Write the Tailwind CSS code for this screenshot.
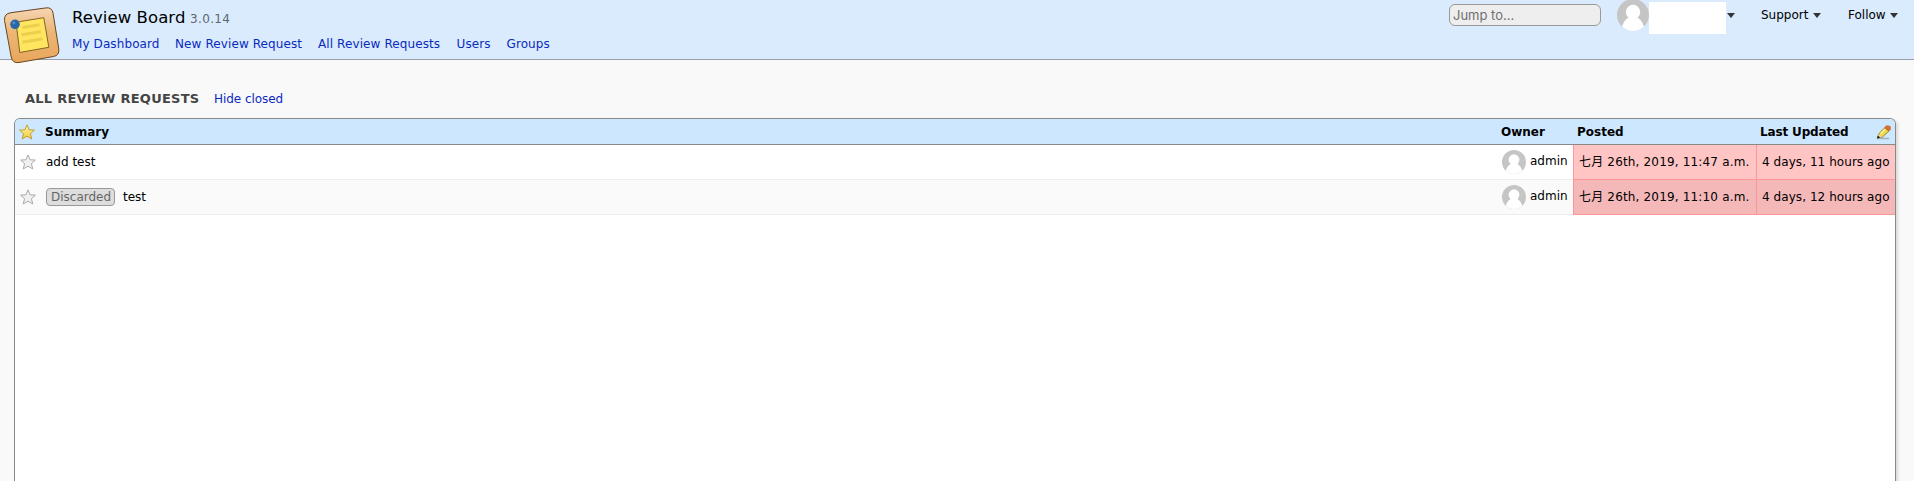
<!DOCTYPE html>
<html lang="en">
<head>
<meta charset="utf-8">
<title>Review Board</title>
<script src="https://cdn.jsdelivr.net/npm/@tailwindcss/browser@4"></script>
</head>
<body class="flex h-[481px] flex-col overflow-hidden bg-[#f9f9f9] font-['DejaVu_Sans','Noto_Sans_CJK_SC',sans-serif] text-[12px] leading-4 text-black">
<svg class="absolute h-0 w-0" aria-hidden="true">
  <defs>
    <linearGradient id="gold" x1="0" y1="0" x2="0" y2="1"><stop offset="0" stop-color="#fff6a0"/><stop offset="1" stop-color="#f4cb3a"/></linearGradient>
    <linearGradient id="wood" x1="0" y1="0" x2="0" y2="1"><stop offset="0" stop-color="#f6d5b3"/><stop offset=".45" stop-color="#ecb676"/><stop offset="1" stop-color="#e9a65b"/></linearGradient>
    <clipPath id="round"><circle cx="16" cy="16" r="16"/></clipPath>
    <symbol id="star" viewBox="0 0 16 16"><path d="M8 .9 10.100 5.800 15.400 6.100 11.400 9.700 12.800 15 8 12.200 3.200 15 4.600 9.700.6 6.100 5.900 5.800Z" stroke-linejoin="round"/></symbol>
    <symbol id="person" viewBox="0 0 32 32"><g clip-path="url(#round)"><path fill="#c5c5c5" d="M0 0h32v32H0z"/><circle cx="16" cy="13" r="7.200" fill="#fff"/><path fill="#fff" d="M4.500 32C5 24 8.500 20 12.500 18h7C23.500 20 27 24 27.500 32Z"/></g></symbol>
  </defs>
</svg>
<header class="flex h-[60px] shrink-0 border-b border-[#999fa6] bg-[#d9ebfd]">
  <svg class="ml-[3px] mt-[6px] h-[58px] w-[58px] shrink-0" viewBox="3 6 58 58">
    <path d="M11 12.700 46 7.900Q52 7.100 53 13L58.800 49Q59.500 55.500 53.500 56.500L19 62.500Q12.500 63.500 11.200 57L4.500 20.500Q3.800 13.700 11 12.700Z" fill="url(#wood)" stroke="#694720" stroke-width="1"/>
    <path d="M16 22.200 43.800 17.700 48.800 47.300 19.800 52.500Z" fill="#ffe560" stroke="#806725" stroke-width="1"/>
    <path d="M22.500 27.500 39.500 24.700M21.500 34.800 41 31.700M22.500 42.300 42.500 38.700" stroke="#ead04d" stroke-width="3"/>
    <circle cx="15" cy="24.300" r="4.800" fill="#2868a8"/><circle cx="13.800" cy="22.800" r="1.600" fill="#518bc2"/>
  </svg>
  <div class="ml-[11px] flex flex-col pt-[5px]">
    <div class="mt-px flex h-6 items-baseline whitespace-nowrap leading-6"><h1 class="w-[118px] text-[16.500px] tracking-[0.07px]">Review Board</h1><span class="text-[12px] tracking-[0.35px] text-[#5d6670]">3.0.14</span></div>
    <nav class="mt-[6px] flex whitespace-nowrap tracking-[0.1px] text-[#0a2ac0]">
      <a class="w-[103px]">My Dashboard</a><a class="w-[143px]">New Review Request</a><a class="w-[138.500px]">All Review Requests</a><a class="w-[50px]">Users</a><a>Groups</a>
    </nav>
  </div>
  <div class="ml-auto flex whitespace-nowrap">
    <div class="mt-1 h-[22px] w-[152px] rounded-[6px] border border-[#999] bg-[#eee] pl-[3px] font-['Inter',sans-serif] text-[13px] leading-[21px] text-[#707070]">Jump to...</div>
    <svg class="ml-4 -mt-px h-8 w-8"><use href="#person"/></svg>
    <div class="mt-[2px] h-8 w-[77px] bg-white"></div>
    <svg class="ml-[1px] mt-[13px] h-[5px] w-[8px]" viewBox="0 0 8 5"><path fill="#333" d="M0 0h8L4 5Z"/></svg>
    <span class="ml-[26px] mt-[7px] w-[52px]">Support</span><svg class="mt-[13px] h-[5px] w-[8px]" viewBox="0 0 8 5"><path fill="#333" d="M0 0h8L4 5Z"/></svg>
    <span class="ml-[27px] mt-[7px] w-[42px]">Follow</span><svg class="mr-[16px] mt-[13px] h-[5px] w-[8px]" viewBox="0 0 8 5"><path fill="#333" d="M0 0h8L4 5Z"/></svg>
  </div>
</header>
<div class="ml-[25px] mt-[31px] flex h-4 shrink-0 whitespace-nowrap"><h2 class="w-[189px] text-[13px] font-bold tracking-[0.25px] text-[#444]">ALL REVIEW REQUESTS</h2><a class="text-[#0a2ac0] tracking-[-0.05px]">Hide closed</a></div>
<main class="ml-[14px] mr-[18px] mt-[11px] flex min-h-0 flex-1 flex-col overflow-hidden whitespace-nowrap rounded-t-[6px] border border-b-0 border-[#888a85] bg-white shadow-[2px_2px_3px_#d8d8d8]">
  <div class="flex h-[26px] shrink-0 border-b border-[#888a85] bg-[#cde7ff] pt-[5px] font-bold">
    <svg class="ml-1 h-4 w-4 fill-[url(#gold)] stroke-[#bd9f38]"><use href="#star"/></svg>
    <span class="ml-[10px]">Summary</span>
    <span class="ml-auto w-[76px]">Owner</span><span class="w-[183px]">Posted</span><span class="w-[116px] tracking-[-0.15px]">Last Updated</span>
    <svg class="mr-[4px] mt-[1px] h-[15px] w-[15px]" viewBox="0 0 15 15"><path d="M1 13.500h12" stroke="#777" stroke-opacity=".5" stroke-width="1.500"/><path d="m1.500 13 1.800-5L9 2.500 13 6 6.500 12Z" fill="#ecd943" stroke="#8d7824" stroke-width=".8"/><path d="m4.500 9 5-5" stroke="#fff59b" stroke-width="1.500"/><path d="m8.700 3 1.500-2.300 4 .6.200 3L12.800 6Z" fill="#df712c" stroke="#b75620" stroke-width=".6"/><path d="m1.500 13 1.500-4L6 12Z" fill="#e9d9a5"/><path d="m.8 13.500 1-3 2.500 2Z" fill="#222"/></svg>
  </div>
  <div class="flex h-[35px] shrink-0">
    <div class="flex flex-1 border-b border-[#eee] bg-white pl-[5px]">
      <svg class="mt-[9px] h-4 w-4 fill-[#f0f0f0] stroke-[#aaa]"><use href="#star"/></svg><span class="ml-[10px] mt-[9px]">add test</span>
      <svg class="ml-auto mt-[5px] h-6 w-6"><use href="#person"/></svg><span class="ml-1 mt-[8px] w-[43px]">admin</span>
    </div>
    <div class="w-[183px] border-b border-l border-[#ff9696] bg-[#ffc4c4] pl-[5px] pt-[9px] tracking-[0.17px]">七月 26th, 2019, 11:47 a.m.</div>
    <div class="w-[139px] border-b border-l border-[#ff9696] bg-[#ffc4c4] pl-[5px] pt-[9px] tracking-[0.06px]">4 days, 11 hours ago</div>
  </div>
  <div class="flex h-[35px] shrink-0">
    <div class="flex flex-1 border-b border-[#eee] bg-[#fafafa] pl-[5px]">
      <svg class="mt-[9px] h-4 w-4 fill-[#f0f0f0] stroke-[#aaa]"><use href="#star"/></svg><span class="ml-[10px] mt-[8px] h-[18px] w-[69px] rounded-[4px] border border-[#999] bg-[#ddd] pl-[4px] leading-[17px] text-[#666]">Discarded</span><span class="ml-[8px] mt-[9px]">test</span>
      <svg class="ml-auto mt-[5px] h-6 w-6"><use href="#person"/></svg><span class="ml-1 mt-[8px] w-[43px]">admin</span>
    </div>
    <div class="w-[183px] border-b border-l border-[#ff9696] bg-[#f4b8b8] pl-[5px] pt-[9px] tracking-[0.17px]">七月 26th, 2019, 11:10 a.m.</div>
    <div class="w-[139px] border-b border-l border-[#ff9696] bg-[#f4b8b8] pl-[5px] pt-[9px] tracking-[0.06px]">4 days, 12 hours ago</div>
  </div>
</main>
</body>
</html>
